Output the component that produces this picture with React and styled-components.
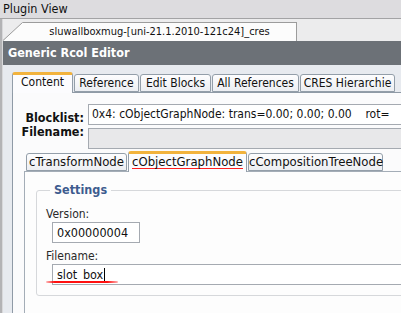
import React from "react";
import styled, { createGlobalStyle } from "styled-components";

const Global = createGlobalStyle`
  html, body { margin: 0; padding: 0; }
  body {
    width: 401px; height: 313px; overflow: hidden;
    font-family: "DejaVu Sans", "Liberation Sans", sans-serif;
    font-stretch: condensed;
    color: #111;
    background: #e7eaef;
  }
`;

const Window = styled.div`
  width: 401px; height: 313px; overflow: hidden;
  display: flex; flex-direction: column;
`;

const TitleBar = styled.div`
  height: 18px; line-height: 18px;
  border-bottom: 1px solid #a3a3a5;
  background: #dddcdf;
  font-size: 12.5px; padding-left: 3px;
  color: #111;
`;

const Body = styled.div`
  flex: 1; display: flex; min-height: 0;
`;

const LeftEdge = styled.div`
  width: 2px; background: #b3b3b5; border-right: 1px solid #d8d8da;
`;

const Main = styled.div`
  flex: 1; min-width: 0; display: flex; flex-direction: column;
`;

const DocStrip = styled.div`
  height: 22px; background: #ececed;
  display: flex; align-items: flex-end;
`;

const DocTab = styled.div`
  display: flex; align-items: flex-end; height: 19px;
`;

const DocLabel = styled.div`
  width: 273px; height: 18px; line-height: 17px;
  background: #fcfcfc;
  border-top: 1px solid #9c9c9c; border-right: 1px solid #9c9c9c;
  text-align: center; font-size: 11px; color: #111;
  margin-left: -1px;
`;

const Header = styled.div`
  height: 24px; line-height: 24px;
  background: #6c7177; color: #fff;
  font-weight: bold; font-size: 12.5px; padding-left: 5px;
`;

const Content = styled.div`
  flex: 1; background: #e7eaef; padding: 7px 0 0 9px;
  display: flex; flex-direction: column;
`;

const TabBar = styled.div`
  display: flex; align-items: flex-end; height: 20px; gap: 1px;
  position: relative; z-index: 1;
`;

const Tab = styled.div`
  width: ${(p) => p.$w}px;
  box-sizing: border-box;
  height: ${(p) => (p.$active ? 21 : 18)}px;
  margin-bottom: ${(p) => (p.$active ? -1 : 0)}px;
  border: 1px solid #939ea9;
  border-bottom: ${(p) => (p.$active ? "none" : "1px solid #939ea9")};
  border-top: ${(p) => (p.$active ? "3px solid #f2b33d" : "1px solid #939ea9")};
  border-radius: 3px 3px 0 0;
  background: ${(p) => (p.$active ? "#fcfcfe" : "linear-gradient(#fdfdfe, #eceef2)")};
  font-size: ${(p) => p.$fs || 12}px;
  line-height: ${(p) => (p.$active ? 15 : 16)}px;
  text-align: center; white-space: nowrap; color: #111;
`;

const TabPage = styled.div`
  flex: 1; width: 430px;
  border-left: 1px solid #8f9aa6; border-top: 1px solid #8f9aa6;
  background: #fbfbfc;
  padding: 11px 0 0 0;
  display: flex; flex-direction: column;
`;

const Fields = styled.div`
  display: flex; gap: 4px;
`;

const Labels = styled.div`
  width: 71px; display: flex; flex-direction: column; align-items: flex-end;
  padding-top: 7px;
`;

const Label = styled.div`
  font-weight: bold; font-size: 12.5px; line-height: 14px; color: #111;
`;

const Inputs = styled.div`
  flex: 1; display: flex; flex-direction: column; gap: 3px;
`;

const Box = styled.div`
  box-sizing: border-box;
  width: ${(p) => (p.$w ? p.$w + "px" : "auto")};
  height: 21px; line-height: 19px;
  border: 1px solid #a5aab1;
  background: ${(p) => (p.$disabled ? "#e8e8ea" : "#fff")};
  font-size: 12px; padding-left: 3px; white-space: nowrap; overflow: hidden;
  color: #111;
`;

const InnerTabBar = styled.div`
  display: flex; align-items: flex-end; height: 17px; gap: 1px;
  margin: 5px 0 0 13px; position: relative; z-index: 1;
`;

const Underlined = styled.span`
  display: inline-block; border-bottom: 1px solid #ff2020; line-height: 13px;
`;

const InnerPage = styled.div`
  flex: 1; margin-left: 11px;
  border-left: 1px solid #a4adb7; border-top: 1px solid #a4adb7;
  background: #fdfdfd;
  padding: 11px 0 0 11px;
`;

const Group = styled.fieldset`
  margin: 0; padding: 0 0 10px 9px;
  border: 1px solid #d6d8db; border-radius: 3px;
  width: 420px; box-sizing: border-box;
`;

const Legend = styled.legend`
  margin-left: 4px; padding: 0 4px;
  font-weight: bold; font-size: 12.5px; color: #3d5c8f;
  line-height: 14px;
`;

const FieldLabel = styled.div`
  font-size: 12px; line-height: 14px; color: #2a2a2a;
  margin-top: ${(p) => p.$mt || 0}px;
`;

const FieldWrap = styled.div`
  position: relative;
`;

const FieldBox = styled(Box)`
  margin: 1px 0 0 6px; padding-left: 4px;
  font-size: 12.5px;
`;

const Caret = styled.span`
  display: inline-block; width: 1px; height: 14px; background: #000;
  vertical-align: -3px; margin-left: 1px;
`;

const Squiggle = styled.div`
  position: absolute; left: 0; top: 17px;
  width: 72px; height: 2px; border-radius: 2px;
  background: linear-gradient(90deg, rgba(255,0,0,0.25), #ff1010 12%, #ff1010 85%, rgba(255,0,0,0.3));
`;

export default function App() {
  const outerTabs = [
    { t: "Content", w: 61, a: true },
    { t: "Reference", w: 65 },
    { t: "Edit Blocks", w: 71 },
    { t: "All References", w: 87 },
    { t: "CRES Hierarchie", w: 95 },
  ];
  return (
    <>
      <Global />
      <Window>
        <TitleBar>Plugin View</TitleBar>
        <Body>
          <LeftEdge />
          <Main>
            <DocStrip>
              <DocTab>
                <svg width="21" height="19" viewBox="0 0 21 19">
                  <path d="M0 19 L 19.5 0.5 L21 0.5 L21 19 Z" fill="#fcfcfc" />
                  <path d="M0 18.5 L 19.5 0.5 L21 0.5" stroke="#9c9c9c" fill="none" strokeWidth="1" />
                </svg>
                <DocLabel>sluwallboxmug-[uni-21.1.2010-121c24]_cres</DocLabel>
              </DocTab>
            </DocStrip>
            <Header>Generic Rcol Editor</Header>
            <Content>
              <TabBar>
                {outerTabs.map((x) => (
                  <Tab key={x.t} $w={x.w} $active={x.a}>{x.t}</Tab>
                ))}
              </TabBar>
              <TabPage>
                <Fields>
                  <Labels>
                    <Label>Blocklist:</Label>
                    <Label>Filename:</Label>
                  </Labels>
                  <Inputs>
                    <Box>0x4: cObjectGraphNode: trans=0.00; 0.00; 0.00&nbsp;&nbsp;&nbsp;&nbsp;rot=</Box>
                    <Box $disabled />
                  </Inputs>
                </Fields>
                <InnerTabBar>
                  <Tab $w={101} $fs={13}>cTransformNode</Tab>
                  <Tab $w={119} $fs={13} $active><Underlined>cObjectGraphNode</Underlined></Tab>
                  <Tab $w={135} $fs={13}>cCompositionTreeNode</Tab>
                </InnerTabBar>
                <InnerPage>
                  <Group>
                    <Legend>Settings</Legend>
                    <FieldLabel $mt={10}>Version:</FieldLabel>
                    <FieldBox $w={88}>0x00000004</FieldBox>
                    <FieldLabel $mt={6}>Filename:</FieldLabel>
                    <FieldWrap>
                      <FieldBox>slot_box<Caret /></FieldBox>
                      <Squiggle />
                    </FieldWrap>
                  </Group>
                </InnerPage>
              </TabPage>
            </Content>
          </Main>
        </Body>
      </Window>
    </>
  );
}
